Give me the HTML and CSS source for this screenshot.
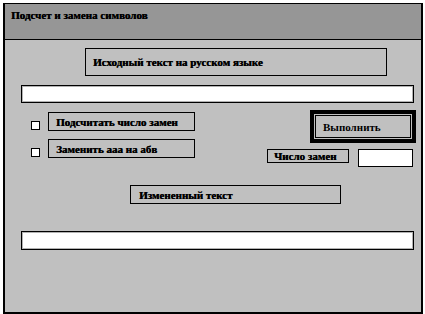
FILE: index.html
```html
<!DOCTYPE html>
<html lang="ru">
<head>
    <meta charset="UTF-8">
    <title>Подсчет и замена символов</title>
    <link rel="stylesheet" href="styles.css">
</head>
<body>
    <div class="window">
        <div class="title-bar">Подсчет и замена символов</div>

        <div class="content">
            <div class="caption source-caption">Исходный текст на русском языке</div>
            <div class="text-field"></div>

            <div class="controls">
                <div class="options">
                    <div class="option">
                        <span class="check"></span>
                        <div class="caption option-caption">Подсчитать число замен</div>
                    </div>
                    <div class="option">
                        <span class="check"></span>
                        <div class="caption option-caption">Заменить ааа на абв</div>
                    </div>
                </div>

                <div class="actions">
                    <button class="btn" type="button">Выполнить</button>
                    <div class="count-row">
                        <div class="caption count-caption">Число замен</div>
                        <div class="count-field"></div>
                    </div>
                </div>
            </div>

            <div class="caption result-caption">Измененный текст</div>
            <div class="text-field result-field"></div>
        </div>
    </div>
</body>
</html>
```

FILE: styles.css
```css
* {
    margin: 0;
    padding: 0;
    box-sizing: border-box;
}

body {
    background: #fff;
    font-family: 'Liberation Serif', 'Times New Roman', serif;
    font-size: 11px;
    font-weight: bold;
    color: #000;
    text-shadow: 0.4px 0 0 #000;
}

.window {
    margin: 3px 0 0 3px;
    width: 420px;
    height: 311px;
    border: 2px solid #000;
    border-top-width: 1px;
    background: #c0c0c0;
}

.title-bar {
    height: 36px;
    background: #969696;
    border-bottom: 1px solid #000;
    padding: 5px 0 0 6px;
}

.content {
    padding-top: 8px;
}

.caption {
    border: 1px solid #000;
    background: #c0c0c0;
    display: flex;
    align-items: center;
    white-space: nowrap;
}

.source-caption {
    margin-left: 80px;
    width: 302px;
    height: 28px;
    padding-left: 7px;
}

.text-field {
    margin: 9px 0 0 16px;
    width: 393px;
    height: 18px;
    border: 1px solid #000;
    box-shadow: inset 0 0 0 1px rgba(0, 0, 0, 0.3);
    background: #fff;
}

.controls {
    display: flex;
    justify-content: space-between;
    margin-top: 7px;
    padding: 0 5px 0 26px;
}

.options {
    display: flex;
    flex-direction: column;
    gap: 8px;
    padding-top: 2px;
}

.option {
    display: flex;
    align-items: flex-end;
    gap: 8px;
}

.check {
    width: 9px;
    height: 9px;
    margin-bottom: 1px;
    border: 1px solid #000;
    background: #fff;
}

.option-caption {
    width: 147px;
    height: 19px;
    padding-left: 7px;
}

.actions {
    display: flex;
    flex-direction: column;
    align-items: flex-end;
    gap: 6px;
}

.btn {
    width: 106px;
    height: 33px;
    border: 4px solid #000;
    box-shadow: inset 0 0 0 1px #c0c0c0, inset 0 0 0 2px #000;
    background: #c0c0c0;
    font: inherit;
    text-align: left;
    padding-left: 9px;
}

.count-row {
    display: flex;
    align-items: flex-start;
    gap: 9px;
    margin-right: 3px;
}

.count-caption {
    width: 82px;
    height: 14px;
    padding-left: 6px;
}

.count-field {
    width: 55px;
    height: 18px;
    border: 1px solid #000;
    background: #fff;
}

.result-caption {
    margin: 18px 0 0 125px;
    width: 211px;
    height: 19px;
    padding-left: 8px;
}

.result-field {
    margin-top: 27px;
    height: 19px;
}
```
